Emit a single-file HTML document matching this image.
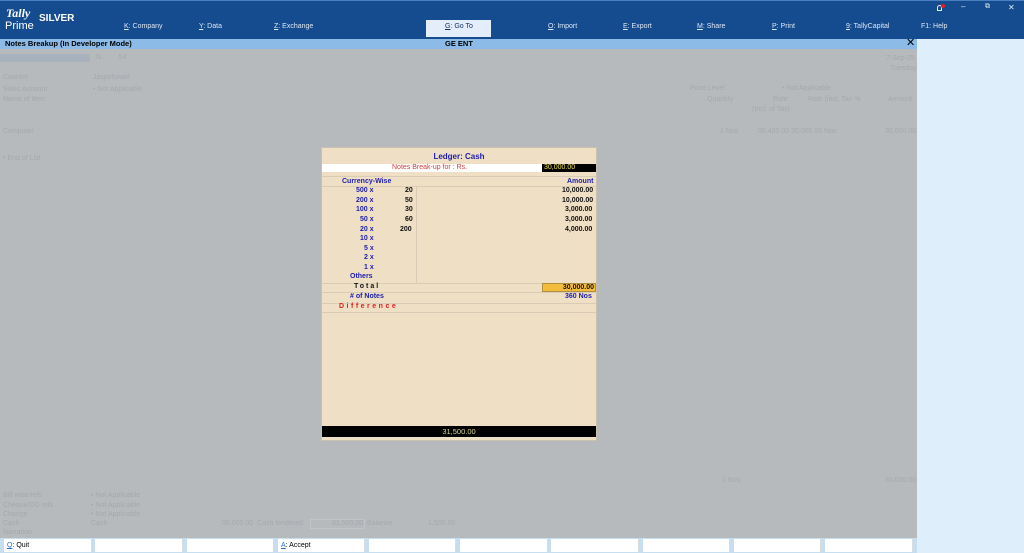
<!DOCTYPE html>
<html><head><style>
*{margin:0;padding:0;box-sizing:border-box}
body{width:1024px;height:553px;position:relative;overflow:hidden;font-family:"Liberation Sans",sans-serif;background:#b6babd}
.a{position:absolute;white-space:nowrap}
.top{left:0;top:0;width:1024px;height:39px;background:#154b8f;border-top:1px solid #4a7fc0}
.m{color:#dfe8f4;font-size:7px;top:23px}
.title{left:0;top:39px;width:917px;height:10px;background:#8bbbe6;font-size:7.5px;font-weight:bold;line-height:10px}
.right{left:917px;top:39px;width:107px;height:514px;background:#deeefa}
.g{color:#a5a9ac;font-size:7px}
.bb{top:539px;height:13px;background:#fff;font-size:7px;line-height:13px;padding-left:3px;border-right:1px solid #d8dde2}
.modal{left:321px;top:147px;width:276px;height:294px;background:#efdfc5;border:1px solid #c9c0b0}
.b{color:#2020b0;font-weight:bold;font-size:7px}
.k{color:#111;font-weight:bold;font-size:7px}
.ln{position:absolute;left:0;width:274px;height:1px;background:#d8ccb6}
</style></head><body>
<div class="a top"></div>
<div class="a" style="left:6px;top:6px;color:#fff;font:italic bold 12px 'Liberation Serif',serif">Tally</div>
<div class="a" style="left:5px;top:20px;color:#fff;font-size:11px">Prime</div>
<div class="a" style="left:39px;top:13px;color:#fff;font-size:10px;font-weight:bold">SILVER</div>
<div class="a m" style="left:124px"><u>K</u>: Company</div>
<div class="a m" style="left:199px"><u>Y</u>: Data</div>
<div class="a m" style="left:274px"><u>Z</u>: Exchange</div>
<div class="a" style="left:426px;top:20px;width:65px;height:17px;background:#e3eefa"></div>
<div class="a m" style="left:445px;color:#153060"><u>G</u>: Go To</div>
<div class="a m" style="left:548px"><u>O</u>: Import</div>
<div class="a m" style="left:623px"><u>E</u>: Export</div>
<div class="a m" style="left:697px"><u>M</u>: Share</div>
<div class="a m" style="left:772px"><u>P</u>: Print</div>
<div class="a m" style="left:846px"><u>9</u>: TallyCapital</div>
<div class="a m" style="left:921px">F1: Help</div>
<div class="a" style="left:937px;top:5px;width:5px;height:6px;border:1px solid #dfe8f4;border-radius:3px 3px 0 0"></div>
<div class="a" style="left:941px;top:4px;width:4px;height:4px;background:#e02020;border-radius:50%"></div>
<div class="a" style="left:961px;top:2px;color:#dfe8f4;font-size:8px">–</div>
<div class="a" style="left:985px;top:3px;color:#dfe8f4;font-size:7px">⧉</div>
<div class="a" style="left:1008px;top:3px;color:#dfe8f4;font-size:8px">✕</div>
<div class="a title"><span style="margin-left:5px">Notes Breakup (In Developer Mode)</span><span class="a" style="left:445px">GE ENT</span><span class="a" style="left:906px;font-size:11px;font-weight:normal;top:-1px">✕</span></div>
<div class="a right"></div>
<div class="a" style="left:0;top:54px;width:90px;height:8px;background:#a8b2bc"></div>
<div class="a g" style="left:96px;top:54px">N... &nbsp;&nbsp;&nbsp;&nbsp; 54</div>
<div class="a g" style="left:3px;top:74px">Counter</div><div class="a g" style="left:93px;top:74px">Jaspalswari</div>
<div class="a g" style="left:3px;top:86px">Sales Account</div><div class="a g" style="left:93px;top:86px">• Not Applicable</div>
<div class="a g" style="left:3px;top:96px">Name of Item</div>
<div class="a g" style="left:3px;top:128px">Computer</div>
<div class="a g" style="left:3px;top:155px">• End of List</div>
<div class="a g" style="left:886px;top:55px">7-Sep-25</div>
<div class="a g" style="left:890px;top:65px">Tuesday</div>
<div class="a g" style="left:690px;top:85px">Price Level</div><div class="a g" style="left:782px;top:85px">• Not Applicable</div>
<div class="a g" style="left:707px;top:96px">Quantity</div><div class="a g" style="left:773px;top:96px">Rate</div><div class="a g" style="left:808px;top:96px">Rate (incl. Tax %</div><div class="a g" style="left:888px;top:96px">Amount</div>
<div class="a g" style="left:752px;top:106px">(Incl. of Tax)</div>
<div class="a g" style="left:720px;top:128px">1 Nos</div><div class="a g" style="left:758px;top:128px">35,400.00 30,000.00 Nos</div><div class="a g" style="left:885px;top:128px">30,000.00</div>
<div class="a g" style="left:722px;top:477px">1 Nos</div><div class="a g" style="left:885px;top:477px">30,000.00</div>
<div class="a g" style="left:3px;top:492px">Bill-wise/refs</div><div class="a g" style="left:91px;top:492px">• Not Applicable</div>
<div class="a g" style="left:3px;top:502px">Cheque/DD refs</div><div class="a g" style="left:91px;top:502px">• Not Applicable</div>
<div class="a g" style="left:3px;top:511px">Change</div><div class="a g" style="left:91px;top:511px">• Not Applicable</div>
<div class="a g" style="left:3px;top:520px">Cash</div><div class="a g" style="left:91px;top:520px">Cash</div>
<div class="a g" style="left:222px;top:520px">30,000.00 &nbsp;Cash tendered</div>
<div class="a" style="left:310px;top:519px;width:55px;height:10px;border:1px solid #c0c4c8"></div>
<div class="a g" style="left:332px;top:520px">31,500.00 &nbsp;Balance</div><div class="a g" style="left:428px;top:520px">1,500.00</div>
<div class="a g" style="left:3px;top:529px">Narration</div>
<div class="a" style="left:0;top:538px;width:917px;height:15px;background:#c7ddf0"></div>
<div class="a bb" style="left:4px;width:88px"><u style="color:#2a6fc0">Q</u>: Quit</div>
<div class="a bb" style="left:95px;width:88px"></div>
<div class="a bb" style="left:187px;width:87px"></div>
<div class="a bb" style="left:278px;width:87px"><u style="color:#2a6fc0">A</u>: Accept</div>
<div class="a bb" style="left:369px;width:87px"></div>
<div class="a bb" style="left:460px;width:88px"></div>
<div class="a bb" style="left:551px;width:88px"></div>
<div class="a bb" style="left:643px;width:87px"></div>
<div class="a bb" style="left:734px;width:87px"></div>
<div class="a bb" style="left:825px;width:88px"></div>

<div class="a modal">
 <div class="a" style="left:0;top:4px;width:274px;text-align:center;color:#2020b0;font-size:8px;font-weight:bold">Ledger: Cash</div>
 <div class="a" style="left:0;top:16px;width:274px;height:8px;background:#fff"></div>
 <div class="a" style="left:70px;top:16px;color:#d04040;font-size:7px">Notes Break-up for : Rs.</div>
 <div class="a" style="left:220px;top:16px;width:54px;height:8px;background:#000;color:#f0e050;font-size:7px;line-height:8px;padding-left:2px">30,000.00</div>
 <div class="ln" style="top:28px"></div>
 <div class="a b" style="left:20px;top:30px">Currency-Wise</div><div class="a b" style="left:245px;top:30px">Amount</div>
 <div class="ln" style="top:38px"></div>
 <div class="a" style="left:94px;top:38px;width:1px;height:98px;background:#d8ccb6"></div>
 <div class="a b" style="left:34px;top:39px">500 x</div><div class="a k" style="left:83px;top:39px">20</div><div class="a k" style="left:240px;top:39px">10,000.00</div>
 <div class="a b" style="left:34px;top:49px">200 x</div><div class="a k" style="left:83px;top:49px">50</div><div class="a k" style="left:240px;top:49px">10,000.00</div>
 <div class="a b" style="left:34px;top:58px">100 x</div><div class="a k" style="left:83px;top:58px">30</div><div class="a k" style="left:243px;top:58px">3,000.00</div>
 <div class="a b" style="left:38px;top:68px">50 x</div><div class="a k" style="left:83px;top:68px">60</div><div class="a k" style="left:243px;top:68px">3,000.00</div>
 <div class="a b" style="left:38px;top:78px">20 x</div><div class="a k" style="left:78px;top:78px">200</div><div class="a k" style="left:243px;top:78px">4,000.00</div>
 <div class="a b" style="left:38px;top:87px">10 x</div>
 <div class="a b" style="left:42px;top:97px">5 x</div>
 <div class="a b" style="left:42px;top:106px">2 x</div>
 <div class="a b" style="left:42px;top:116px">1 x</div>
 <div class="a b" style="left:28px;top:125px">Others</div>
 <div class="ln" style="top:135px"></div>
 <div class="a k" style="left:32px;top:135px;letter-spacing:2px">Total</div>
 <div class="a" style="left:220px;top:135px;width:54px;height:9px;background:#f4bc3c;border:1px solid #b09040;color:#111;font-size:7px;font-weight:bold;text-align:right;padding-right:1px;line-height:8px">30,000.00</div>
 <div class="ln" style="top:144px"></div>
 <div class="a b" style="left:28px;top:145px">#  of Notes</div><div class="a b" style="left:243px;top:145px">360 Nos</div>
 <div class="ln" style="top:155px"></div>
 <div class="a" style="left:17px;top:155px;color:#e02020;font-size:7px;font-weight:bold;letter-spacing:2.5px">Difference</div>
 <div class="ln" style="top:164px"></div>
 <div class="a" style="left:0;top:278px;width:274px;height:11px;background:#000;color:#d8d890;font-size:7.5px;text-align:center;line-height:11px">31,500.00</div>
</div>
</body></html>
